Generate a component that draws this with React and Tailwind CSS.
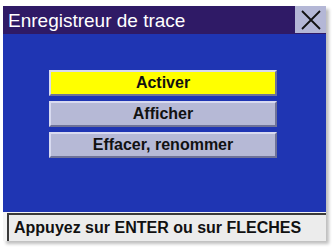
import React from "react";

const buttons = [
  { label: "Activer", active: true },
  { label: "Afficher" },
  { label: "Effacer, renommer" },
];

function MenuButton({ label, active }) {
  return (
    <div
      className={`h-[26px] w-[228px] flex items-center justify-center border-2 border-t-[#d8daf0] border-l-[#d8daf0] border-b-[#6e7298] border-r-[#6e7298] text-[16px] font-bold text-[#111] leading-none ${
        active ? "bg-[#ffff00]" : "bg-[#b6b9d6]"
      }`}
    >
      {label}
    </div>
  );
}

export default function App() {
  return (
    <div
      className="w-[332px] h-[248px] bg-white pl-[3px] pt-[6px] overflow-hidden"
      style={{ fontFamily: '"Liberation Sans", Arial, sans-serif' }}
    >
      <div className="w-[323px] h-[235px] flex flex-col shadow-[3px_3px_3px_rgba(0,0,0,0.25)]">
        {/* Title bar */}
        <div className="h-[28px] flex items-stretch bg-[#2f1a66]">
          <div className="flex-1 flex items-center pl-[5px] text-[19px] text-white leading-none">
            Enregistreur de trace
          </div>
          <div className="w-[31px] mb-[1px] bg-[#b4b7d6] flex items-center justify-center">
            <svg width="22" height="22" viewBox="0 0 22 22">
              <path d="M2 2 L20 20 M20 2 L2 20" stroke="#111" strokeWidth="1.8" fill="none" />
            </svg>
          </div>
        </div>

        {/* Body */}
        <div className="h-[178px] bg-[#1f35b3] pt-[36px] pl-[46px] flex flex-col gap-[5px]">
          {buttons.map((b) => (
            <MenuButton key={b.label} label={b.label} active={b.active} />
          ))}
        </div>

        {/* Status bar */}
        <div className="flex-1 bg-[#f4f4f4] pl-[4px] pt-[1px]">
          <div className="h-full bg-[#ececec] border-l-2 border-t-2 border-[#3a3a3a] flex items-center pl-[5px] text-[16px] font-bold text-[#111] leading-none">
            Appuyez sur ENTER ou sur FLECHES
          </div>
        </div>
      </div>
    </div>
  );
}
